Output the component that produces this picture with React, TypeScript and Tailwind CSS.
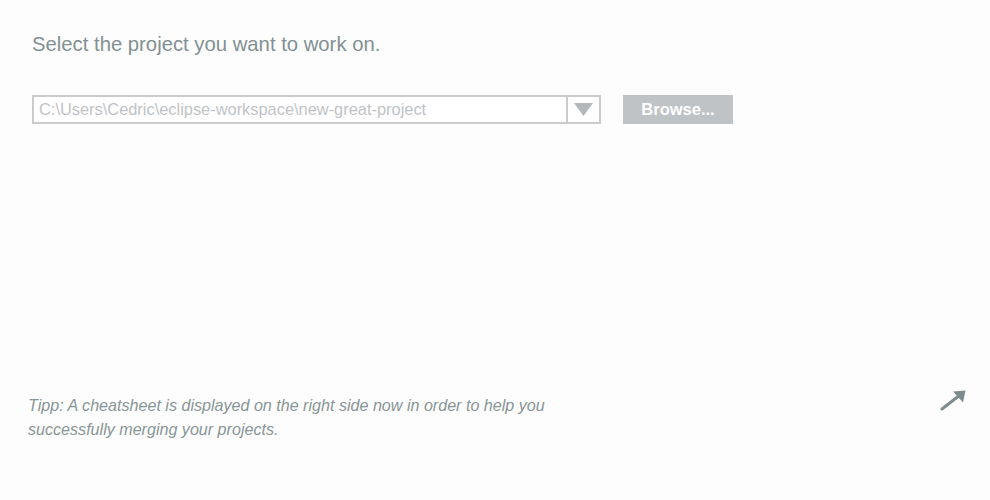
import * as React from "react";

const ArrowUpRight = () => (
  <svg width="28" height="24" viewBox="0 0 28 24" fill="none">
    <path d="M2 21L20 7" stroke="#7f8c8d" strokeWidth="3" strokeLinecap="round" />
    <path d="M13 3.5L25.5 2.5L23 14.5Z" fill="#7f8c8d" />
  </svg>
);

export default function App() {
  return (
    <div
      className="w-[990px] h-[500px] bg-[#fdfdfd] flex flex-col"
      style={{ fontFamily: '"Liberation Sans", Arial, sans-serif' }}
    >
      <div className="pl-[32px] pt-[32px]">
        <p className="text-[20.3px] leading-[24px] text-[#829092]">
          Select the project you want to work on.
        </p>
        <div className="flex items-center mt-[39px] gap-[22px]">
          <div className="flex w-[569px] h-[29px] border-2 border-[#c9cbcc] bg-white">
            <div className="flex-1 flex items-center px-[5px] text-[16.4px] text-[#bfc3c6] leading-none">
              C:\Users\Cedric\eclipse-workspace\new-great-project
            </div>
            <div className="w-[33px] border-l-2 border-[#c9cbcc] flex items-center justify-center">
              <svg width="19" height="13" viewBox="0 0 19 13">
                <path d="M0 0H19L9.5 13Z" fill="#b3b7b9" />
              </svg>
            </div>
          </div>
          <button className="w-[110px] h-[29px] bg-[#bfc3c6] text-white font-bold text-[16.5px] leading-none">
            Browse...
          </button>
        </div>
      </div>
      <div className="flex-1" />
      <div className="flex items-start justify-between pl-[28px] pr-[22px] pb-[59px]">
        <p className="italic text-[16.1px] leading-[24px] text-[#889595] w-[560px]">
          Tipp: A cheatsheet is displayed on the right side now in order to help you
          successfully merging your projects.
        </p>
        <div className="mt-[-5px]">
          <ArrowUpRight />
        </div>
      </div>
    </div>
  );
}
